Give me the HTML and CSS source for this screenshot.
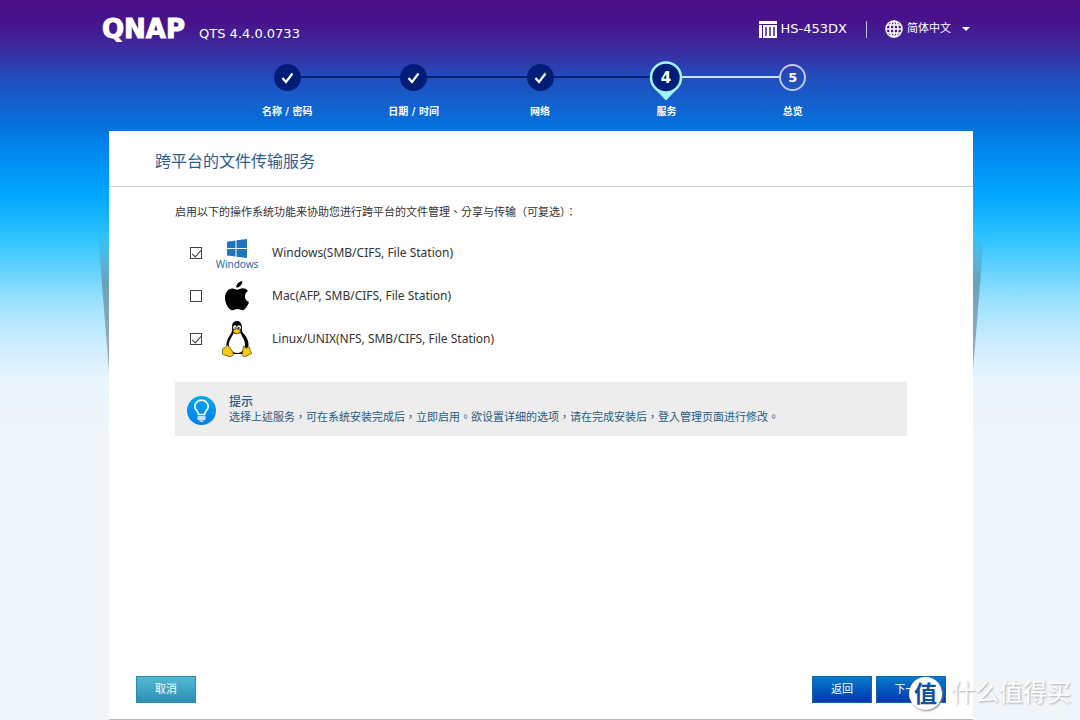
FILE: index.html
```html
<!DOCTYPE html>
<html lang="zh-CN">
<head>
<meta charset="utf-8">
<meta name="viewport" content="width=device-width, initial-scale=1">
<title>QTS 4.4.0.0733</title>
<link rel="stylesheet" href="styles.css">
</head>
<body>
<div class="page">
  <header class="topbar">
    <div class="brand"><span class="logo">QNAP</span><span class="version">QTS 4.4.0.0733</span></div>
    <div class="tools">
      <span class="device">
        <svg width="18" height="17" viewBox="0 0 18 17" aria-hidden="true"><path fill="#fff" d="M0 0h18v3H0zM0 4h3v13H0zM4 4h14v13H4z"/><path stroke="#3c1f98" stroke-width="1.5" d="M7 6v9M11 6v9M15 6v9"/></svg>
        HS-453DX
      </span>
      <button class="lang" type="button">
        <svg width="18" height="18" viewBox="0 0 18 18" fill="none" stroke="#fff" stroke-width="1.5" aria-hidden="true"><circle cx="9" cy="9" r="8"/><ellipse cx="9" cy="9" rx="4" ry="8"/><path d="M9 1v16M1 9h16M2 5h14M2 13h14"/></svg>
        <span class="lang-name">简体中文</span>
        <svg class="caret" width="8" height="4" viewBox="0 0 8 4" aria-hidden="true"><path fill="#fff" d="M0 0h8L4 4z"/></svg>
      </button>
    </div>
  </header>

  <ol class="steps">
    <li class="step"><span class="node"><svg width="27" height="27" viewBox="0 0 27 27" aria-hidden="true"><circle cx="13.500" cy="13.500" r="13.500" fill="#001d78"/><path d="M8.500 14l3.500 4 6.500-8.500" fill="none" stroke="#fff" stroke-width="2.200"/></svg></span><span class="step-name">名称 / 密码</span></li>
    <li class="step done"><span class="node"><svg width="27" height="27" viewBox="0 0 27 27" aria-hidden="true"><circle cx="13.500" cy="13.500" r="13.500" fill="#001d78"/><path d="M8.500 14l3.500 4 6.500-8.500" fill="none" stroke="#fff" stroke-width="2.200"/></svg></span><span class="step-name">日期 / 时间</span></li>
    <li class="step done"><span class="node"><svg width="27" height="27" viewBox="0 0 27 27" aria-hidden="true"><circle cx="13.500" cy="13.500" r="13.500" fill="#001d78"/><path d="M8.500 14l3.500 4 6.500-8.500" fill="none" stroke="#fff" stroke-width="2.200"/></svg></span><span class="step-name">网络</span></li>
    <li class="step done" aria-current="step"><span class="node"><svg width="34" height="40" viewBox="0 0 34 40"><path d="M7 29L17 39.500 27 29z" fill="#a0f6ff"/><circle cx="17" cy="16.500" r="15" fill="#001d78" stroke="#a0f6ff" stroke-width="2.500"/><text class="pin-number" x="17" y="22" text-anchor="middle">4</text></svg></span><span class="step-name">服务</span></li>
    <li class="step next"><span class="node"><span class="ring">5</span></span><span class="step-name">总览</span></li>
  </ol>

  <main class="panel">
    <h1 class="title">跨平台的文件传输服务</h1>
    <div class="content">
      <p class="intro" lang="zh-TW">启用以下的操作系统功能来协助您进行跨平台的文件管理、分享与传输（可复选）：</p>
      <div class="services">
        <label class="service">
          <input class="check" type="checkbox" checked>
          <span class="os">
            <svg width="20" height="22" viewBox="0 -3 20 22" fill="#1f75bd" aria-hidden="true"><path d="M0 2.700L8.500 1.500V9H0zM9.500 1.300L20 0v9H9.500zM0 10h8.500v7.600L0 16.400zM9.500 10H20v9L9.500 17.700z"/></svg>
            <span class="os-name">Windows</span>
          </span>
          <span>Windows(SMB/CIFS, File Station)</span>
        </label>
        <label class="service">
          <input class="check" type="checkbox">
          <span class="os">
            <svg width="24" height="30" viewBox="0 0 24 30" aria-hidden="true"><path d="M17.300 0c.4 3.300-2.700 6.700-6 6.600C11 3.500 14 .5 17.300 0zM12.200 8.700c1.500 0 3.300-1.500 5.800-1.400 2 .1 3.900 1.100 5 2.600-4.700 3.200-3.700 9 1 11.100-1.300 4-4 8-6.500 8.200-1.800.1-2.700-1.200-5-1.200-2.300 0-3.200 1.200-4.900 1.200C3.700 29.200 0 22.500 0 17c0-5.800 3.500-9.500 7.200-9.600 2 0 3.900 1.300 5 1.300z"/></svg>
          </span>
          <span>Mac(AFP, SMB/CIFS, File Station)</span>
        </label>
        <label class="service">
          <input class="check" type="checkbox" checked>
          <span class="os">
            <svg width="30" height="36" viewBox="0 0 30 36" aria-hidden="true"><path fill="#080808" d="M15 0c-3.600 0-5 2.500-4.900 6 .1 3 .3 4.500-1.600 7.200C6.500 16.500 4 20.500 4.500 25L8 33h14l4.500-8c.5-5-2-9.500-5.500-13-1.600-2-.8-4-1.100-7C19.600 2 17.800 0 15 0z"/><path fill="#fff" d="M11.600 12c1.600 1.700 4.600 1.700 6.700-.5 1.500 4 5 7.500 4.700 12.500-.3 4.500-2.500 7.700-7.500 7.900-5 0-8.500-3-8.700-8 0-4.500 3.300-8 4.800-11.900z"/><ellipse cx="12.900" cy="6.500" rx="1.700" ry="2.200" fill="#fff"/><ellipse cx="17" cy="6.500" rx="1.900" ry="2.300" fill="#fff"/><circle cx="13.200" cy="7" r=".8"/><circle cx="16.700" cy="7" r=".9"/><path fill="#f9c710" stroke="#5c4500" stroke-width=".4" d="M11 9.700l3.600-2 4 2c0 1.500-2.500 3-4 3s-3.600-1.500-3.600-3z"/><path fill="#fcca12" stroke="#3b3000" stroke-width=".7" d="M5.500 24.500c2 .5 3.500 4 5.300 6.500 1.500 2.500-.5 4.800-3.300 4.500C5 35.200 3.500 34 1 33.500c-1.500-.4-.2-2.500-.5-5 0-1.600 2-1.400 3-2.200.8-.6.900-2.200 2-1.800zM22 25c1-.3.6 2 2.300 2 1.700.1 2.200-1.700 3.200-.5.700 1-.2 2.400.8 3.500 2.200 1.800 1.500 2.400-.5 3.300-2.300 1-3.500 2.300-5 2.200-3-.2-2.700-3.300-2-5.500.5-2-.2-4.500 1.200-5z"/></svg>
          </span>
          <span>Linux/UNIX(NFS, SMB/CIFS, File Station)</span>
        </label>
      </div>
      <section class="tip">
        <svg width="29" height="29" viewBox="0 0 29 29" aria-hidden="true"><defs><linearGradient id="bulb" x1="0" y1="0" x2="0" y2="1"><stop stop-color="#00a9f2"/><stop offset="1" stop-color="#007de8"/></linearGradient></defs><circle cx="14.500" cy="14.500" r="14.500" fill="url(#bulb)"/><path d="M11.500 18.500c0-3.500-3.700-4-3.700-8a6.700 6.300 0 0 1 13.400 0c0 4-3.700 4.500-3.700 8z" fill="none" stroke="#fff" stroke-width="1.700"/><path d="M10.500 21h8M10.500 23h8M12.500 25.200h4" stroke="#fff" stroke-width="1.300"/></svg>
        <div>
          <h2 class="tip-title">提示</h2>
          <p class="tip-text" lang="zh-TW">选择上述服务，可在系统安装完成后，立即启用。欲设置详细的选项，请在完成安装后，登入管理页面进行修改。</p>
        </div>
      </section>
    </div>
    <footer class="actions">
      <button class="btn cancel" type="button">取消</button>
      <button class="btn back" type="button">返回</button>
      <button class="btn forward" type="button">下一步</button>
    </footer>
  </main>
  <div class="watermark"><span class="mark">值</span><span>什么值得买</span></div>
</div>
</body>
</html>
```
FILE: styles.css
```css
* { box-sizing: border-box; }
body {
  margin: 0;
  font: 11px/16px "DejaVu Sans", "Noto Sans CJK SC", sans-serif;
  color: #333;
}
h1, h2, p, ol { margin: 0; padding: 0; }
button { font: inherit; color: #fff; cursor: pointer; }
svg { flex: none; }
.page {
  position: relative;
  display: flex;
  flex-direction: column;
  min-height: 100vh;
  padding-bottom: 1px;
  overflow: hidden;
  background: linear-gradient(#4b0f88 0, #48128b 20px, #3b2ba0 50px, #1f50be 80px, #0670dc 125px, #008cf0 155px, #00a6ff 193px, #30c5ff 240px, #9ee2fe 303px, #cdedff 345px, #e8f5ff 380px, #eff5f9 430px);
}
.topbar {
  display: flex;
  justify-content: space-between;
  height: 60px;
  padding: 0 110px 0 102px;
  color: #fff;
}
.brand { display: flex; align-items: baseline; gap: 14px; padding-top: 13px; }
.logo { font-size: 26px; line-height: 32px; font-weight: bold; -webkit-text-stroke: 1px #fff; }
.version { font-size: 13px; }
.tools { display: flex; height: 58px; align-items: center; font-size: 13px; }
.device { display: flex; align-items: center; gap: 4px; padding-right: 19px; border-right: 1px solid #c6bde4; }
.lang { display: flex; align-items: center; gap: 4px; padding: 0 0 0 18px; border: 0; background: none; }
.lang-name { font-size: 11px; }
.caret { margin-left: 7px; }

.steps { display: flex; width: 632px; align-self: center; height: 71px; list-style: none; color: #fff; }
.step { position: relative; flex: 1; display: flex; flex-direction: column; align-items: center; font-size: 10px; font-weight: bold; }
.node { position: relative; z-index: 1; display: flex; justify-content: center; align-items: center; height: 42px; padding-bottom: 7px; }
.step[aria-current] .node { padding: 1px 0; }
.step-name { padding-top: 2px; }
.step.done::before, .step.next::before {
  content: "";
  position: absolute;
  top: 16px;
  right: calc(50% + 13px);
  width: calc(100% - 26px);
  height: 2px;
  background: #001d78;
}
.step.next::before { background: #d3d9ef; }
.pin-number { font: bold 15px "DejaVu Sans", sans-serif; fill: #fff; }
.ring { display: grid; place-items: center; width: 27px; height: 27px; border: 2px solid #c3c5ec; border-radius: 50%; font-size: 13px; }

.panel { position: relative; flex: 1; display: flex; flex-direction: column; width: 80%; margin-left: 109px; background: #fff; box-shadow: 0 1px 0 #bbb; }
.panel::before, .panel::after {
  content: "";
  position: absolute;
  top: 104px;
  width: 11px;
  height: 136px;
  background: linear-gradient(rgba(90, 125, 145, 0), rgba(90, 125, 145, .6) 35%, rgba(110, 130, 145, .6));
}
.panel::before { right: 100%; clip-path: polygon(0 0, 100% 0, 100% 100%); }
.panel::after { left: 100%; clip-path: polygon(0 0, 100% 0, 0 100%); }
.title { padding: 19px 46px 12px; border-bottom: 1px solid #ccc; font-size: 16px; line-height: 24px; font-weight: normal; color: #2b5c93; }
.content { padding: 18px 66px; }
.intro, .tip-text { font-family: "DejaVu Sans", "Noto Sans CJK TC", sans-serif; }
.services { padding: 10px 0 22px 15px; font-family: "Noto Sans", sans-serif; font-size: 12px; }
.service { display: grid; grid-template-columns: 12px 70px 1fr; align-items: center; height: 43px; }
.check { appearance: none; position: relative; width: 12px; height: 12px; margin: 0; border: 1px solid #444; background: #fff; }
.check:checked::before { content: ""; position: absolute; left: 3px; top: 0; width: 4px; height: 8px; border: solid #333; border-width: 0 1px 1px 0; transform: rotate(42deg); }
.os { display: flex; flex-direction: column; align-items: center; }
.os-name { font-size: 10px; line-height: 12px; color: #2469a9; }
.tip { display: flex; align-items: center; gap: 13px; min-height: 54px; padding: 7px 12px 5px; background: #ededed; color: #285b80; }
.tip-title { font-size: 12px; line-height: 16px; font-weight: 500; }
.actions { display: flex; gap: 4px; margin-top: auto; padding: 0 27px 16px; }
.btn { width: 60px; height: 27px; padding: 0; border: 1px solid #0768ae; background: linear-gradient(#077bc9, #0036af); }
.cancel { margin-right: auto; border-color: #2d8ba8; background: linear-gradient(#53b8d6, #2b91b2); }
.forward { width: 70px; }

.watermark { position: absolute; right: 9px; bottom: 10px; display: flex; align-items: center; gap: 9px; font-size: 24px; line-height: 34px; color: #fff; text-shadow: 1px 1px 2px #aaa; pointer-events: none; }
.mark { display: grid; place-items: center; width: 33px; height: 33px; border-radius: 50%; background: #fff; color: #0a50a5; font-size: 23px; font-weight: bold; text-shadow: none; box-shadow: 1px 1px 2px #888; }
```
